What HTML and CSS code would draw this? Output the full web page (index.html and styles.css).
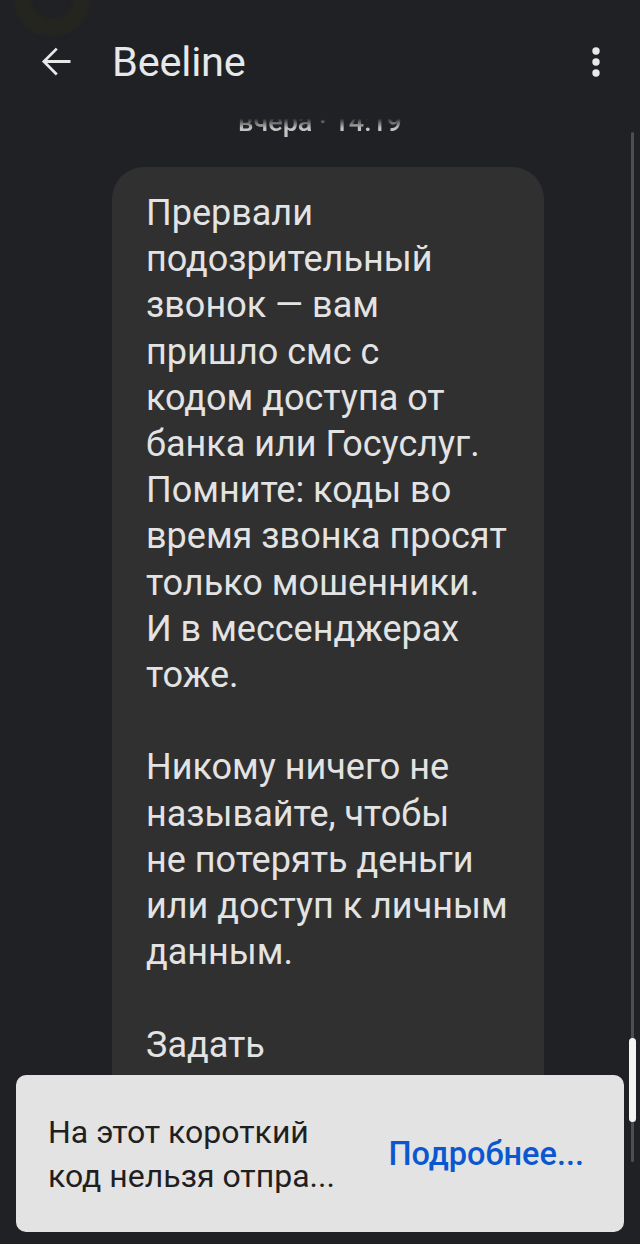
FILE: index.html
```html
<!DOCTYPE html>
<html lang="ru">
<head>
<meta charset="utf-8">
<title>Beeline</title>
<link rel="stylesheet" href="styles.css">
</head>
<body>
<div class="screen">
  <header class="appbar">
    <svg class="back" viewBox="0 0 24 24" width="45" height="45" aria-hidden="true">
      <path d="M20 11.25H7.6l5.6-5.6-1.05-1.05L4.75 12l7.4 7.4 1.05-1.05-5.6-5.6H20z" fill="#e8e8e8"/>
    </svg>
    <h1 class="title">Beeline</h1>
    <svg class="more" viewBox="0 0 10 32" width="10" height="32" aria-hidden="true">
      <circle cx="5" cy="5" r="3.7" fill="#e8e8e8"/>
      <circle cx="5" cy="16" r="3.7" fill="#e8e8e8"/>
      <circle cx="5" cy="27" r="3.7" fill="#e8e8e8"/>
    </svg>
  </header>
  <div class="avatar-ghost"></div>
  <main class="thread">
    <div class="stamp">вчера · 14:19</div>
    <div class="bubble">
      Прервали<br>подозрительный<br>звонок — вам<br>пришло смс с<br>кодом доступа от<br>банка или Госуслуг.<br>Помните: коды во<br>время звонка просят<br>только мошенники.<br>И в мессенджерах<br>тоже.<br><br>Никому ничего не<br>называйте, чтобы<br>не потерять деньги<br>или доступ к личным<br>данным.<br><br>Задать<br>вопрос
    </div>
  </main>
  <div class="scroll-track"><div class="scroll-thumb"></div></div>
  <div class="snackbar">
    <div class="snack-text">На этот короткий<br>код нельзя отпра...</div>
    <div class="snack-action">Подробнее...</div>
  </div>
</div>
</body>
</html>
```

FILE: styles.css
```css
* { box-sizing: border-box; }
html, body { margin: 0; padding: 0; background: #202124; }
body { font-family: Roboto, "Noto Sans", sans-serif; }

.screen {
  position: relative;
  width: 640px;
  height: 1244px;
  overflow: hidden;
  background: #202124;
}

.avatar-ghost {
  position: absolute;
  left: 14px;
  top: -38px;
  width: 76px;
  height: 74px;
  border-radius: 50%;
  border: 17px solid #252520;
  filter: blur(1.5px);
}

.appbar {
  height: 104px;
  display: flex;
  align-items: flex-start;
  padding-top: 40px;
  background: #202124;
}

.back {
  display: block;
  margin-left: 33px;
  margin-top: -1px;
  flex: none;
}

.title {
  margin: 0 0 0 34px;
  font-weight: 400;
  font-size: 41.5px;
  line-height: 44px;
  color: #e8e8e8;
  letter-spacing: -0.2px;
  flex: 1;
}

.more {
  display: block;
  margin-right: 39px;
  margin-top: 6px;
  flex: none;
}

.thread {
  height: 1140px;
  overflow: hidden;
}

.stamp {
  margin-top: 3px;
  text-align: center;
  font-size: 27px;
  line-height: 30px;
  font-weight: 500;
  color: #c2c2c2;
  -webkit-mask-image: linear-gradient(to bottom, transparent 38%, rgba(0,0,0,0.45) 52%, #000 70%);
  mask-image: linear-gradient(to bottom, transparent 38%, rgba(0,0,0,0.45) 52%, #000 70%);
}

.bubble {
  margin: 30px 0 0 112px;
  width: 432px;
  padding: 23px 20px 40px 34px;
  background: #303030;
  border-radius: 32px;
  color: #e3e3e3;
  font-size: 36px;
  line-height: 46.2px;
  white-space: nowrap;
}

.scroll-track {
  position: absolute;
  left: 631px;
  top: 132px;
  width: 2.5px;
  height: 1030px;
  background: #4d4e51;
  border-radius: 2px;
}

.scroll-thumb {
  position: absolute;
  left: -2px;
  top: 906px;
  width: 6.5px;
  height: 84px;
  background: #f4f4f4;
  border-radius: 4px;
}

.snackbar {
  position: absolute;
  left: 16px;
  top: 1075px;
  width: 608px;
  height: 157px;
  background: #e3e3e3;
  border-radius: 10px;
  display: flex;
  align-items: center;
  justify-content: space-between;
  padding: 0 40px 0 32px;
}

.snack-text {
  font-size: 32px;
  line-height: 44px;
  color: #1f1f1f;
  white-space: nowrap;
}

.snack-action {
  font-size: 32.5px;
  line-height: 44px;
  font-weight: 500;
  color: #0b57d0;
  white-space: nowrap;
}
```
